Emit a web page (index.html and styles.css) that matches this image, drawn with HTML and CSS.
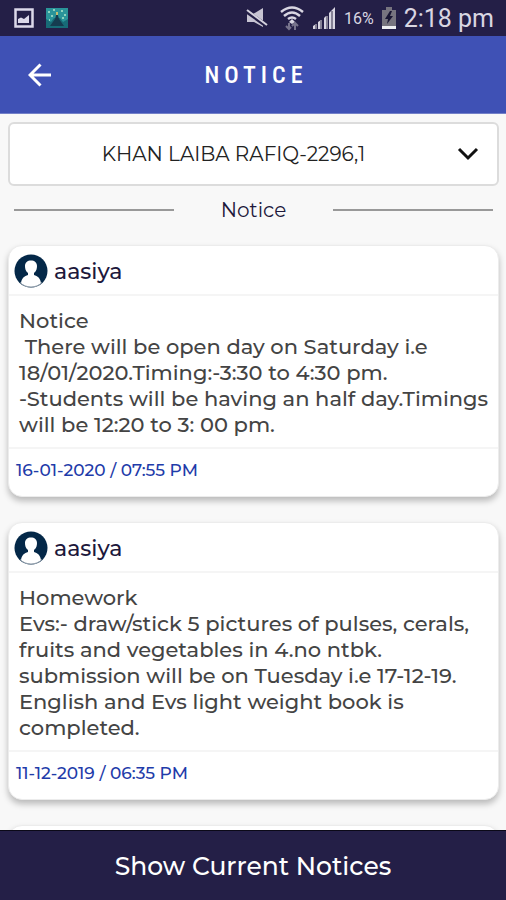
FILE: index.html
```html
<!DOCTYPE html>
<html lang="en">
<head>
<meta charset="utf-8">
<meta name="viewport" content="width=device-width, initial-scale=1">
<title>Notice</title>
<link rel="stylesheet" href="styles.css">
</head>
<body>
<svg width="0" height="0" class="defs" aria-hidden="true">
  <symbol id="avatar" viewBox="0 0 34 34">
    <circle cx="17" cy="17" r="16.500" fill="#042848"/>
    <path d="M7 29.500C7.500 24 10.500 22 14 21V19C11.500 17 11 14.500 11 12C11 8.500 13.500 6.500 17 6.500S23 8.500 23 12C23 14.500 22.500 17 20 19V21C23.500 22 26.500 24 27 29.500C24 32 20.500 33 17 33S10 32 7 29.500Z" fill="#fff"/>
    <path d="M6 28.500C9 31.500 13 33 17 33S25 31.500 28 28.500" fill="none" stroke="#93a0ad"/>
  </symbol>
</svg>
<div class="status">
  <div class="group">
    <svg width="20" height="22" viewBox="0 0 20 22"><path d="M1.500 2.500H18.500V19.500H1.500Z" fill="none" stroke="#dcd9ea" stroke-width="2.500"/><path d="M4 16V12L7 10.500L10 12L15 8V16Z" fill="#dcd9ea"/></svg>
    <svg width="22" height="20" viewBox="0 0 22 20"><path fill="#2a9499" d="M0 0H22V20H0Z"/><path fill="#176b77" d="M0 11L5 14L8 10H14L17 14L22 11V20H0Z"/><path fill="#153c50" d="M11 4L13 11L18 18H4L9 11Z"/><path d="M2 4H4M5 8H7M7 2H9M15 3H17M18 7H20M3 12H4M16 10H18" stroke="#8dd2be" stroke-width="2"/><path fill="#c6bd70" d="M10 4H12V7H10Z"/></svg>
  </div>
  <div class="group right">
    <svg width="22" height="22" viewBox="0 0 22 22"><path d="M1 7H7L17 1V20L8 15H1Z" fill="#c7c4d2"/><path d="M0 4L21 19" stroke="#241f47" stroke-width="4"/><path d="M1 3L21 18" stroke="#d5d2de" stroke-width="2"/></svg>
    <svg class="wifi" width="24" height="26" viewBox="0 0 24 26"><g fill="none" stroke="#d9d6e2" stroke-width="2.500"><path d="M1 7Q12-2 23 7M4 11Q12 4 20 11M8 14Q12 11 16 14"/></g><path d="M12 14L15 17L12 19L9 17Z" fill="#d9d6e2"/><path d="M9 18V24M6 21L9 24L11 22M15 25V18M12 21L15 18L18 21" fill="none" stroke="#77738c" stroke-width="2"/></svg>
    <svg class="signal" width="24" height="24" viewBox="0 0 24 24"><path d="M1 23V20L4 18V23ZM6 23V16L9 14V23ZM12 23V12L14 10V23ZM17 23V7L23 1V23Z" fill="#d9d6e2"/><path d="M4 18V23M9 14V23M15 10V23M20 5V23" stroke="#858195" stroke-width="2"/></svg>
    <span class="percent">16%</span>
    <svg width="14" height="22" viewBox="0 0 14 22"><path d="M0 3H4V0H10V3H14V22H0Z" fill="#77747f"/><path d="M8 4L3 12H6L5 17L11 9H8L10 4Z" fill="#191634"/><path d="M0 19H14V22H0Z" fill="#eeeef2"/></svg>
    <span class="clock">2:18 pm</span>
  </div>
</div>
<header class="bar">
  <button class="back" type="button" aria-label="Back"><svg width="24" height="24" viewBox="0 0 24 24"><path d="M23 12H2M12.500 1.500L2 12L12.500 22.500" fill="none" stroke="#fff" stroke-width="3"/></svg></button>
  <h1>NOTICE</h1>
</header>
<main>
  <div class="picker">
    <select aria-label="Student"><option>KHAN LAIBA RAFIQ-2296,1</option></select>
    <svg width="22" height="14" viewBox="0 0 22 14"><path d="M2 2L11 11L20 2" fill="none" stroke="#111" stroke-width="3"/></svg>
  </div>
  <h2 class="section">Notice</h2>
  <article class="card">
    <div class="author"><svg width="34" height="34"><use href="#avatar"/></svg>aasiya</div>
    <p class="message">Notice
 There will be open day on Saturday i.e
18/01/2020.Timing:-3:30 to 4:30 pm.
-Students will be having an half day.Timings
will be 12:20 to 3: 00 pm.</p>
    <time class="date">16-01-2020 / 07:55 PM</time>
  </article>
  <article class="card">
    <div class="author"><svg width="34" height="34"><use href="#avatar"/></svg>aasiya</div>
    <p class="message">Homework
Evs:- draw/stick 5 pictures of pulses, cerals,
fruits and vegetables in 4.no ntbk.
submission will be on Tuesday i.e 17-12-19.
English and Evs light weight book is
completed.</p>
    <time class="date">11-12-2019 / 06:35 PM</time>
  </article>
  <article class="card"><div class="author"></div></article>
</main>
<button class="current" type="button">Show Current Notices</button>
</body>
</html>
```
FILE: styles.css
```css
* { box-sizing: border-box; }
body {
  margin: 0;
  height: 100vh;
  display: flex;
  flex-direction: column;
  background: #f8f8f8;
  font-family: Montserrat, Inter, "Open Sans", sans-serif;
}
svg { display: block; flex: none; }
.defs { position: absolute; }
.status {
  flex: none;
  height: 36px;
  padding: 0 12px 0 14px;
  display: flex;
  align-items: center;
  justify-content: space-between;
  background: #241f47;
  color: #d9d6e2;
  font-family: Roboto, sans-serif;
}
.group { display: flex; align-items: center; gap: 12px; }
.right { gap: 8px; }
.wifi { margin-left: 4px; }
.percent { font-size: 16px; }
.clock { font-size: 25px; line-height: 36px; padding-top: 2px; }
.bar {
  flex: none;
  height: 78px;
  padding: 0 24px;
  display: grid;
  grid-template-columns: 32px 1fr 32px;
  align-items: center;
  background: #3f51b5;
  border-bottom: 1px solid #7380c8;
  color: #fff;
}
.bar h1 {
  margin: 0;
  padding-left: 6px;
  text-align: center;
  font: 500 24px "Roboto Condensed", Roboto, sans-serif;
  letter-spacing: 5px;
}
button { border: 0; cursor: pointer; }
.back {
  display: flex;
  justify-content: center;
  padding: 0;
  background: none;
}
main {
  flex: 1;
  min-height: 0;
  overflow: hidden;
  padding: 8px 7px 0 8px;
}
.picker {
  display: grid;
  align-items: center;
}
.picker > * { grid-area: 1 / 1; }
.picker svg { justify-self: end; margin-right: 20px; pointer-events: none; }
.picker select {
  width: 100%;
  height: 64px;
  padding: 0 48px 0 8px;
  appearance: none;
  border: 2px solid #dcdcdc;
  border-radius: 6px;
  background: #fff;
  color: #222;
  font: 400 20px Montserrat, Inter, sans-serif;
  text-align-last: center;
}
.section {
  margin: 10px 6px 21px;
  display: grid;
  grid-template-columns: 1fr 1fr 1fr;
  align-items: center;
  text-align: center;
  color: #1d183c;
  font-size: 20px;
  font-weight: 400;
  line-height: 28px;
}
.section::before, .section::after {
  content: "";
  height: 2px;
  background: #999;
}
.card {
  margin: 0 0 25px;
  border: 1px solid #ececec;
  border-radius: 14px;
  background: #fff;
  box-shadow: 0 4px 6px rgba(0, 0, 0, 0.25);
}
.author {
  height: 50px;
  padding: 2px 5px 0;
  display: flex;
  align-items: center;
  gap: 6px;
  border-bottom: 2px solid #f5f5f5;
  color: #1d183c;
  font-size: 22px;
  font-weight: 500;
}
.message {
  margin: 0;
  padding: 12px 4px 9px 10px;
  white-space: pre-wrap;
  color: #444;
  font-size: 21px;
  font-weight: 500;
  line-height: 26px;
}
.date {
  display: block;
  height: 49px;
  padding: 0 7px;
  border-top: 2px solid #f5f5f5;
  color: #1f3caa;
  font-size: 17px;
  font-weight: 500;
  line-height: 43px;
}
.current {
  flex: none;
  height: 70px;
  border-top: 1px solid #0b0918;
  background: #241f47;
  color: #fff;
  font: 500 25px Montserrat, Inter, sans-serif;
}
```
